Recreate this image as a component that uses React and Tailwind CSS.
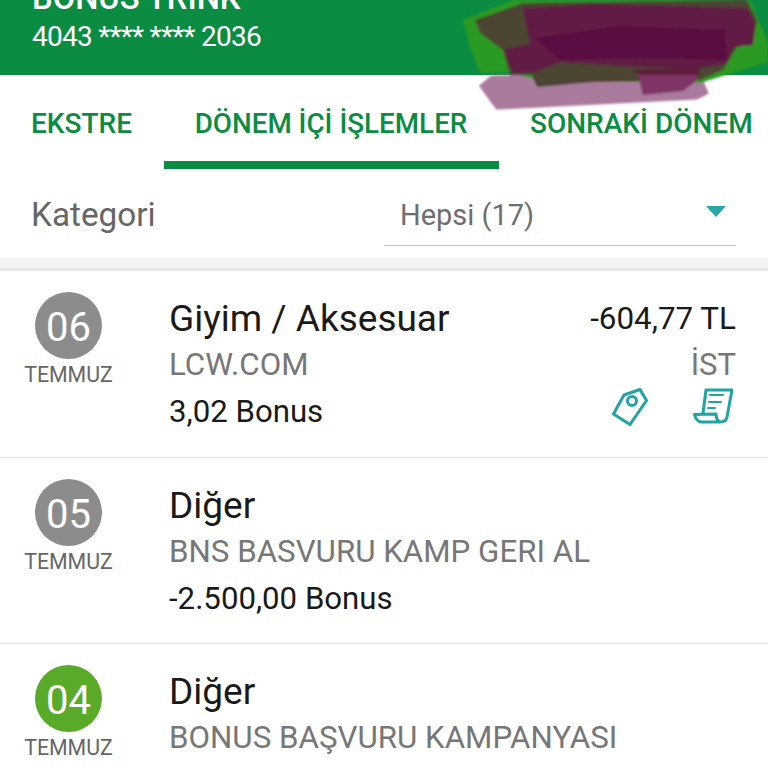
const rows = [
  {
    day: '06',
    title: 'Giyim / Aksesuar',
    merchant: 'LCW.COM',
    bonus: '3,02 Bonus',
    amount: '-604,77 TL',
    city: 'İST',
    badge: 'bg-[#8c8c8c]',
    height: 'h-[187px]',
    icons: true,
  },
  {
    day: '05',
    title: 'Diğer',
    merchant: 'BNS BASVURU KAMP GERI AL',
    bonus: '-2.500,00 Bonus',
    badge: 'bg-[#8c8c8c]',
    height: 'h-[186px]',
  },
  {
    day: '04',
    title: 'Diğer',
    merchant: 'BONUS BAŞVURU KAMPANYASI',
    badge: 'bg-[#5aaa2a]',
    height: 'h-[186px]',
  },
]

function TagIcon() {
  return (
    <svg width="36" height="38" viewBox="0 0 36 38" fill="none" stroke="#1fa3a3" strokeWidth="3" strokeLinejoin="round">
      <path d="M28 1.5 L34.5 12.5 L18 36.5 L1.5 26 L12 7 Z" />
      <circle cx="20" cy="13" r="4.5" />
    </svg>
  )
}

function ReceiptIcon() {
  return (
    <svg width="40" height="36" viewBox="0 0 40 36" fill="none" stroke="#1fa3a3" strokeWidth="3" strokeLinejoin="round" strokeLinecap="round">
      <path d="M10 25 L13 2 L39 2 L34 29 Q33 34 27 34 L8 34 Q3 33 1.5 26.5 L23 26 Q23 32 27 34" />
      <path d="M17 7 H30 M16 14 H28 M15 20 H22" strokeWidth="2" />
    </svg>
  )
}

function Row({ row }) {
  return (
    <div className={`relative flex shrink-0 border-b border-[#e2e2e2] bg-white pt-[21px] ${row.height}`}>
      <div className="flex w-[137px] shrink-0 flex-col items-center">
        <div className={`flex h-[67px] w-[67px] items-center justify-center rounded-full pt-[4px] text-[40px] text-white ${row.badge}`}>
          {row.day}
        </div>
        <div className="mt-[3px] text-[21.3px] leading-[26px] text-[#666666]">TEMMUZ</div>
      </div>
      <div className="ml-[32px] mt-[2px] flex flex-col">
        <div className="text-[37px] leading-[50px] text-[#1a1a1a]">{row.title}</div>
        <div className="mt-[-2px] whitespace-nowrap text-[31.3px] leading-[46px] text-[#777777]">{row.merchant}</div>
        {row.bonus && <div className="mt-[1px] text-[31.2px] leading-[46px] text-[#1a1a1a]">{row.bonus}</div>}
      </div>
      {row.amount && (
        <div className="ml-auto mr-[32px] mt-[2px] flex flex-col items-end">
          <div className="text-[31.4px] leading-[50px] text-[#1a1a1a]">{row.amount}</div>
          <div className="text-[31px] leading-[42px] text-[#777777]">{row.city}</div>
          {row.icons && (
            <div className="mr-[3px] mt-[2px] flex items-start gap-[45px]">
              <TagIcon />
              <ReceiptIcon />
            </div>
          )}
        </div>
      )}
    </div>
  )
}

export default function App() {
  return (
    <div className="relative h-[768px] w-[768px] overflow-hidden bg-white font-['Roboto',sans-serif]">
      {/* Header */}
      <div className="flex h-[75px] flex-col justify-end overflow-hidden bg-[#0a8c42] px-[32px] pb-[20px] text-white">
        <div className="text-[32.7px] font-medium leading-[36px]">BONUS TRINK</div>
        <div className="mt-[3px] text-[28px] leading-[36px] tracking-[-0.75px]">4043 **** **** 2036</div>
      </div>

      {/* Scribble over the card image */}
      <svg className="absolute left-0 top-0" width="768" height="115" viewBox="0 0 768 115">
        <defs>
          <filter id="soft">
            <feGaussianBlur stdDeviation="1.2" />
          </filter>
        </defs>
        <g filter="url(#soft)" strokeLinejoin="round">
          <path d="M481 86 L492 77 L698 72 L707 93 L697 98 L497 108 Z" fill="#a97a9c" stroke="#a97a9c" strokeWidth="3" />
          <path d="M463 20 L513 0 L750 0 L768 43 L768 62 L700 83 L537 80 L510 72 L480 73 L470 47 Z" fill="#2c9a20" />
          <path d="M475 20 L523 3 L747 0 L757 20 L753 43 L737 47 L723 70 L700 80 L593 82 L537 87 L532 75 L510 75 L503 50 L480 33 Z" fill="#4c4430" />
          <path d="M523 8 L600 4 L747 8 L755 23 L753 45 L733 47 L727 63 L700 68 L640 67 L560 62 L535 72 L513 73 L503 50 L530 44 Z" fill="#611a45" />
          <path d="M535 38 L620 26 L725 30 L727 60 L640 58 L560 60 Z" fill="#5a0b3f" />
          <path d="M633 70 L700 67 L698 75 L640 75 Z" fill="#5e1a3a" />
          <path d="M638 75 L698 75 L696 81 L683 91 L643 95 Z" fill="#7e3466" />
        </g>
      </svg>

      {/* Tabs */}
      <div className="flex h-[94px] items-start text-[28px] font-medium text-[#0a8c42]">
        <div className="w-[164px] pl-[31px] pt-[31px] leading-[36px]">EKSTRE</div>
        <div className="h-[94px] w-[335px] border-b-[8px] border-[#0a8c42] pr-[1px] pt-[31px] text-center text-[27.8px] leading-[36px]">DÖNEM İÇİ İŞLEMLER</div>
        <div className="pl-[31px] pt-[31px] leading-[36px] whitespace-nowrap">SONRAKİ DÖNEM</div>
      </div>

      {/* Category filter */}
      <div className="flex h-[89px] items-start bg-white pl-[31px] pr-[32px]">
        <div className="w-[353px] pt-[26px] text-[33.3px] leading-[40px] text-[#666666]">Kategori</div>
        <div className="relative mt-[1px] h-[76px] w-[352px] border-b border-[#9fd3d3] pl-[16px] pt-[25px] text-[29px] leading-[40px] text-[#6e6e6e]">
          Hepsi (17)
          <div className="absolute right-[10px] top-[36px] h-0 w-0 border-x-[10px] border-t-[11px] border-x-transparent border-t-[#26a6a6]" />
        </div>
      </div>

      <div className="h-[13px] border-b-[3px] border-[#e8e8e8] bg-[#f4f4f4]" />

      {rows.map((row) => (
        <Row key={row.day} row={row} />
      ))}
    </div>
  )
}
